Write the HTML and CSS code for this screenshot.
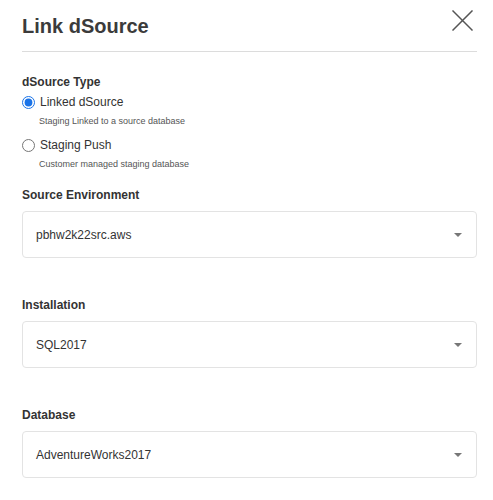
FILE: index.html
```html
<!DOCTYPE html>
<html lang="en">
<head>
<meta charset="utf-8">
<title>Link dSource</title>
<link rel="stylesheet" href="styles.css">
</head>
<body>
<div class="dialog">
  <header class="dialog-header">
    <h1 class="dialog-title">Link dSource</h1>
    <button class="close-btn" type="button" aria-label="Close">
      <svg width="21" height="21" viewBox="0 0 21 21">
        <path d="M1 1 L20 20 M20 1 L1 20" stroke="#555" stroke-width="1.5" fill="none" stroke-linecap="square"/>
      </svg>
    </button>
  </header>

  <div class="dialog-body">
    <div class="type-group">
      <div class="field-label">dSource Type</div>
      <label class="radio-row">
        <input type="radio" name="dsource-type" checked>
        <span>Linked dSource</span>
      </label>
      <div class="radio-help">Staging Linked to a source database</div>
      <label class="radio-row second">
        <input type="radio" name="dsource-type">
        <span>Staging Push</span>
      </label>
      <div class="radio-help">Customer managed staging database</div>
    </div>

    <div class="field">
      <div class="field-label">Source Environment</div>
      <div class="select">
        <span class="select-value">pbhw2k22src.aws</span>
        <span class="caret"></span>
      </div>
    </div>

    <div class="field">
      <div class="field-label">Installation</div>
      <div class="select">
        <span class="select-value">SQL2017</span>
        <span class="caret"></span>
      </div>
    </div>

    <div class="field">
      <div class="field-label">Database</div>
      <div class="select">
        <span class="select-value">AdventureWorks2017</span>
        <span class="caret"></span>
      </div>
    </div>
  </div>
</div>
</body>
</html>
```

FILE: styles.css
```css
* {
  box-sizing: border-box;
}

html, body {
  margin: 0;
  padding: 0;
  background: #fff;
}

body {
  font-family: "Liberation Sans", Arial, Helvetica, sans-serif;
  color: #333;
}

.dialog {
  padding: 0 16px 0 22px;
}

/* header with title, close button and divider */
.dialog-header {
  display: flex;
  justify-content: space-between;
  align-items: flex-start;
  height: 52px;
  border-bottom: 1px solid #dcdcdc;
}

.dialog-title {
  margin: 14px 0 0;
  font-size: 20px;
  line-height: 24px;
  font-weight: bold;
  color: #3b3b3b;
}

.close-btn {
  margin: 10px 4px 0 0;
  padding: 0;
  border: 0;
  background: none;
  width: 21px;
  height: 21px;
  cursor: pointer;
}

.close-btn svg {
  display: block;
}

/* form body */
.type-group {
  margin-top: 22px;
  margin-bottom: 17px;
}

.field-label {
  font-size: 12px;
  line-height: 16px;
  font-weight: bold;
  color: #333;
}

.radio-row {
  display: flex;
  align-items: center;
  height: 20px;
  margin-top: 2px;
  font-size: 12px;
  color: #333;
}

.radio-row.second {
  margin-top: 8px;
}

.radio-row input {
  width: 13px;
  height: 13px;
  margin: 0 5px 0 0;
  accent-color: #1a73e8;
}

.radio-help {
  margin-top: 3px;
  padding-left: 17px;
  font-size: 9px;
  line-height: 12px;
  color: #555;
}

.field {
  margin-bottom: 39px;
}

.field .field-label {
  margin-bottom: 8px;
}

.select {
  display: flex;
  align-items: center;
  justify-content: space-between;
  height: 47px;
  padding: 0 14px 0 13px;
  border: 1px solid #e3e3e3;
  border-radius: 4px;
  background: #fff;
}

.select-value {
  font-size: 12px;
  color: #333;
}

.caret {
  width: 0;
  height: 0;
  border-left: 4px solid transparent;
  border-right: 4px solid transparent;
  border-top: 4px solid #777;
}
```
